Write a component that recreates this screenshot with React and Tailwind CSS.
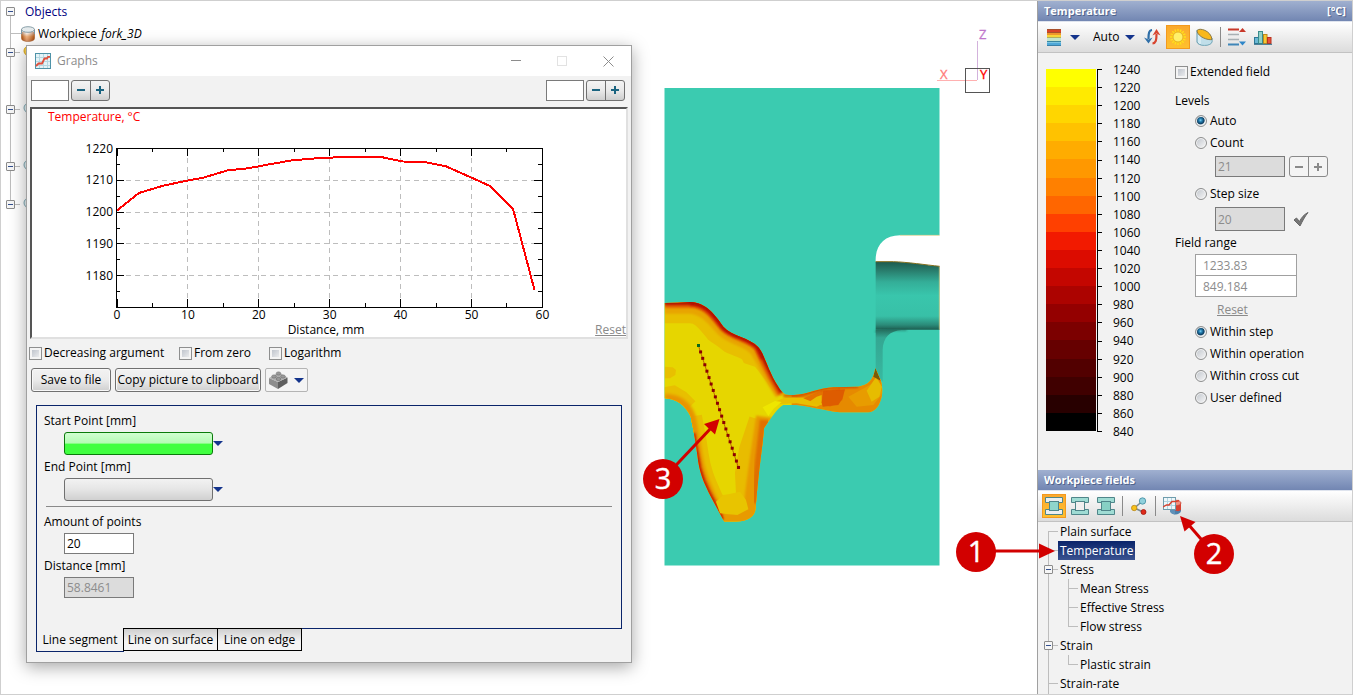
import React from "react";

const LEVELS = [
  "#ffff00", "#ffea00", "#ffd600", "#ffc200", "#ffac00", "#ff9800", "#ff8000", "#ff6600", "#ff4000", "#f21a00",
  "#dc0c00", "#c40600", "#ac0300", "#940000", "#7c0000", "#660000", "#520000", "#400000", "#280000", "#000000",
];

const SERIES = [
  [117, 210.5], [139, 193], [163, 185.7], [188, 180.5], [204, 177.5], [227, 170.5], [248, 168.3], [271, 164], [293, 160.2],
  [318, 158.2], [330, 157.7], [345, 156.8], [380, 156.8], [403, 161.5], [424, 162], [446, 166.3], [470, 177], [490, 186],
  [513, 208.7], [534.5, 290],
];

const SILHOUETTE =
  "M74,249 L112,248 L150,246 C200,248 225,285 250,320 C275,350 330,352 355,382 C375,405 385,455 415,500 C430,525 440,526 462,525 C500,524 540,503 580,502 L655,500 C685,495 700,480 706,445 L722,480 C728,500 728,515 725,530 C718,560 705,575 685,577 L600,577 C560,573 500,557 470,555 L430,555 C415,562 395,590 372,625 C368,680 357,740 347,865 C345,890 325,903 290,905 L253,905 L215,835 C190,785 178,760 172,705 C165,650 158,620 152,590 C135,555 110,537 74,535 Z";

function Caret({ className = "" }) {
  return (
    <svg width="10" height="5" viewBox="0 0 10 5" className={`shrink-0 ${className}`} aria-hidden="true">
      <path d="M0 0H10L5 5Z" fill="#14348c" />
    </svg>
  );
}

function ExpandBox() {
  return (
    <svg width="9" height="9" viewBox="0 0 9 9" className="relative shrink-0" aria-hidden="true">
      <rect x=".5" y=".5" width="8" height="8" rx=".5" fill="#f6f6f6" stroke="#8c8c8c" />
      <path d="M2 4.5H7" stroke="#33508f" />
    </svg>
  );
}

function CheckBox({ label }) {
  return (
    <label className="flex h-[18px] items-center gap-[2px]">
      <input
        type="checkbox"
        className="size-[13px] appearance-none border border-[#8e8f8f] bg-linear-to-br from-[#b4bac4] to-[#f6f6f6] shadow-[inset_0_0_0_2px_#f4f4f4]"
      />
      {label}
    </label>
  );
}

function Radio({ label, name, checked = false }) {
  return (
    <label className="flex h-[22px] items-center gap-[3px]">
      <input
        type="radio"
        name={name}
        defaultChecked={checked}
        className="size-3 appearance-none rounded-full border border-[#8e8f8f] bg-linear-to-br from-[#c0c5cc] to-[#f8f8f8] shadow-[inset_0_0_0_1px_#f4f4f4] checked:bg-[radial-gradient(circle_at_45%_42%,#7fd4f6_0,#2a86b8_18%,#0a3a5e_46%,#dfe6ea_58%,#eef1f3_100%)]"
      />
      {label}
    </label>
  );
}

function Stepper({ faded = false }) {
  const tone = faded
    ? "border-[#8a8a8a] bg-[#f4f4f4] text-[#8a8a8a]"
    : "border-[#707070] bg-linear-to-b from-[#f4f4f4] from-0% via-[#e9e9e9] via-50% to-[#cecece] text-[#1b6480]";
  return (
    <div className={`flex h-[21px] w-[39px] overflow-hidden rounded-[3px] border ${tone}`}>
      <button type="button" aria-label="Decrease" className="grid flex-1 place-items-center border-r border-inherit">
        <svg width="8" height="8" viewBox="0 0 8 8"><path d="M0 4H8" stroke="currentColor" strokeWidth="2" /></svg>
      </button>
      <button type="button" aria-label="Increase" className="grid flex-1 place-items-center">
        <svg width="8" height="8" viewBox="0 0 8 8"><path d="M0 4H8M4 0V8" stroke="currentColor" strokeWidth="2" /></svg>
      </button>
    </div>
  );
}

function PushButton({ children, className = "" }) {
  return (
    <button
      type="button"
      className={`h-6 rounded-[3px] border border-[#707070] bg-linear-to-b from-[#f2f2f2] via-[#ebebeb] via-50% to-[#cfcfcf] shadow-[inset_0_0_0_1px_#f8f8f8] ${className}`}
    >
      {children}
    </button>
  );
}

function GraphsIcon() {
  return (
    <svg width="16" height="16" viewBox="0 0 16 16" aria-hidden="true">
      <rect x=".5" y=".5" width="15" height="15" fill="#e4f3f7" stroke="#4f93a8" />
      <path d="M4.5 1V15M8.5 1V15M12.5 1V15M1 4.5H15M1 8.5H15M1 12.5H15" stroke="#b6d8e2" />
      <path d="M1 13L3.500 10.500L7 10.500L9.500 5.500L12 5.500L13 3.800L15 3.800" fill="none" stroke="#e0503c" strokeWidth="1.800" />
    </svg>
  );
}

function Bulb({ lit = false }) {
  return (
    <svg width="12" height="16" viewBox="0 0 12 16" aria-hidden="true">
      <path d="M6 1A5 5 0 0 0 1 6C1 9 4 9.500 4 12.500H8C8 9.500 11 9 11 6A5 5 0 0 0 6 1Z" fill={lit ? "#f6d04a" : "#e6f2f5"} stroke={lit ? "#d9a520" : "#7fa9b5"} />
      <path d="M4 14.500H8" stroke="#888" strokeWidth="2" />
    </svg>
  );
}

function ObjectTree() {
  const below = ["lit", "", "", "off", "", "", "off", "", "off"];
  return (
    <ul className="relative w-60 pl-[5px]">
      <li className="absolute top-3 left-[9px] h-[191px] w-px bg-[#bdbdbd]" aria-hidden="true" />
      <li className="relative flex h-[21px] items-center gap-[10px] text-[#00007f]">
        <ExpandBox />
        Objects
      </li>
      <li className="relative flex h-[21px] items-center pt-[2px] pl-[5px]">
        <span className="h-px w-[10px] bg-[#bdbdbd]" />
        <svg width="14" height="16" viewBox="0 0 14 16" aria-hidden="true">
          <defs>
            <linearGradient id="wp" x2="0" y2="1"><stop offset=".3" stopColor="#f3ebe4" /><stop offset=".6" stopColor="#e98b3c" /><stop offset="1" stopColor="#c4520c" /></linearGradient>
            <linearGradient id="wpx"><stop stopColor="#7a3000" stopOpacity=".5" /><stop offset=".4" stopColor="#fff" stopOpacity=".35" /><stop offset="1" stopColor="#7a3000" stopOpacity=".5" /></linearGradient>
          </defs>
          <path d="M.5 3.500V12.500C.5 16.300 13.500 16.300 13.500 12.500V3.500Z" fill="url(#wp)" stroke="#a8683a" strokeWidth=".8" />
          <path d="M1 6V12.500C1 16 13 16 13 12.500V6Z" fill="url(#wpx)" />
          <path d="M.5 8V3.500M13.500 8V3.500" stroke="#7d98a4" />
          <ellipse cx="7" cy="3.500" rx="6.500" ry="2.800" fill="#e4eaec" stroke="#6f8a95" strokeWidth=".8" />
        </svg>
        <span className="pl-[3px]">Workpiece <em className="pl-px">fork_3D</em></span>
      </li>
      {below.map((kind, i) => (
        <li key={i} className="relative flex h-[19px] items-center">
          {kind && (
            <>
              <ExpandBox />
              <span className="mr-[3px] h-px w-[5px] bg-[#bdbdbd]" />
              <Bulb lit={kind === "lit"} />
            </>
          )}
        </li>
      ))}
    </ul>
  );
}

function Chart() {
  const xs = [0, 10, 20, 30, 40, 50, 60];
  const ys = [1220, 1210, 1200, 1190, 1180];
  const px = (v) => 117 + v * 7.09;
  const py = (v) => 148.5 + (1220 - v) * 3.18;
  const minorX = [5, 15, 25, 35, 45, 55];
  const minorY = [1215, 1205, 1195, 1185, 1175];
  return (
    <div className="relative border-2 border-t-[#555] border-r-[#e0e0e0] border-b-[#e0e0e0] border-l-[#555] bg-white">
      <svg viewBox="32 109 594 228" className="block w-full" shapeRendering="crispEdges" fontSize="12">
        <g stroke="#bdbdbd" strokeDasharray="5 4">
          {xs.slice(1, 6).map((v) => <path key={v} d={`M${px(v)} 149V307`} />)}
          {ys.slice(1).map((v) => <path key={v} d={`M117 ${py(v)}H542`} />)}
        </g>
        <rect x="116.500" y="148.500" width="426" height="159" fill="none" stroke="#000" />
        <g stroke="#000">
          {xs.map((v) => <path key={v} d={`M${px(v)} 149v7M${px(v)} 307v-8`} />)}
          {minorX.map((v) => <path key={v} d={`M${px(v)} 149v3M${px(v)} 307v-4`} />)}
          {ys.map((v) => <path key={v} d={`M117 ${py(v)}h7M542 ${py(v)}h-8`} />)}
          {minorY.map((v) => <path key={v} d={`M117 ${py(v)}h3M542 ${py(v)}h-4`} />)}
        </g>
        <polyline points={SERIES.map((p) => p.join(",")).join(" ")} fill="none" stroke="#f00" strokeWidth="2" />
        <text x="48" y="121" fill="#f00">Temperature, °C</text>
        <g textAnchor="middle">
          {xs.map((v) => <text key={v} x={px(v)} y="319">{v}</text>)}
          <text x="326" y="334">Distance, mm</text>
        </g>
        <g textAnchor="end">
          {ys.map((v) => <text key={v} x="113" y={py(v) + 4}>{v}</text>)}
        </g>
      </svg>
      <a href="#reset-chart" className="absolute right-0 bottom-0 leading-[14px] text-[#8a8a8a] underline">Reset</a>
    </div>
  );
}

function PointPicker({ label, active = false }) {
  const tone = active
    ? "border-[#0b7a0b] bg-linear-to-b from-[#d2ffd2] from-0% via-[#b4fbb4] via-48% to-[#40ff40] to-52%"
    : "border-[#707070] bg-linear-to-b from-[#f2f2f2] from-0% via-[#e6e6e6] via-48% to-[#d0d0d0]";
  return (
    <div>
      <div className="h-[18px] leading-[18px]">{label}</div>
      <div className="mt-[2px] mb-[3px] flex items-center pl-5">
        <button type="button" aria-label={label} className={`h-[23px] w-[149px] rounded-[3px] border ${tone}`} />
        <button type="button" aria-label={`${label} options`} className="grid h-[23px] w-[10px] place-items-center"><Caret /></button>
      </div>
    </div>
  );
}

function GraphsWindow() {
  return (
    <section className="absolute top-[44px] left-[25px] w-[606px] border border-[#a0a0a0] bg-[#f2f2f2] shadow-[0_4px_16px_rgba(0,0,0,0.35)]">
      <header className="flex h-[30px] items-center bg-white pl-2 text-[#8c8c8c]">
        <GraphsIcon />
        <h2 className="pl-[6px]">Graphs</h2>
        <div className="ml-auto flex text-[#8c8c8c]">
          <button type="button" aria-label="Minimize" className="grid h-[30px] w-[46px] place-items-center">
            <svg width="10" height="10"><path d="M0 4.500H10" stroke="currentColor" /></svg>
          </button>
          <button type="button" aria-label="Maximize" disabled className="grid h-[30px] w-[46px] place-items-center text-[#e2e2e2]">
            <svg width="10" height="10"><rect x=".5" y=".5" width="9" height="9" fill="none" stroke="currentColor" /></svg>
          </button>
          <button type="button" aria-label="Close" className="grid h-[30px] w-[46px] place-items-center">
            <svg width="11" height="11"><path d="M.5 .5L10.500 10.500M10.500 .5L.5 10.500" stroke="currentColor" /></svg>
          </button>
        </div>
      </header>
      <div className="px-[3px]">
        <div className="flex h-[31px] items-center justify-between pr-[3px] pb-[3px] pl-px">
          {["Left cursor", "Right cursor"].map((n) => (
            <div key={n} className="flex gap-[2px]">
              <input type="text" aria-label={n} className="h-[21px] w-[38px] border border-[#7a7a7a] bg-white px-[2px]" />
              <Stepper />
            </div>
          ))}
        </div>
        <Chart />
        <div className="mt-[5px] -ml-px flex">
          <div className="w-[150px]"><CheckBox label="Decreasing argument" /></div>
          <div className="w-[90px]"><CheckBox label="From zero" /></div>
          <CheckBox label="Logarithm" />
        </div>
        <div className="mt-[6px] flex gap-1 pl-px">
          <PushButton className="w-20">Save to file</PushButton>
          <PushButton className="w-[146px]">Copy picture to clipboard</PushButton>
          <button type="button" aria-label="Appearance" className="flex h-6 w-[43px] items-center justify-center gap-[6px] rounded-[2px] border border-[#b4b4b4] bg-[#f4f4f4]">
            <svg width="19" height="18" viewBox="0 0 19 18" aria-hidden="true">
              <path d="M0 7L9 11V18L0 13Z" fill="#8d8d8d" />
              <path d="M9 11L18.500 6.500V12L9 18Z" fill="#5f5f5f" />
              <path d="M0 7L10 1.500L18.500 6.500L9 11Z" fill="#b0b0b0" />
              <g fill="#999" stroke="#6c6c6c" strokeWidth=".6">
                <ellipse cx="9.500" cy="2.500" rx="2.300" ry="1.600" />
                <ellipse cx="5" cy="5.500" rx="2.300" ry="1.600" />
                <ellipse cx="14" cy="5.500" rx="2.300" ry="1.600" />
                <ellipse cx="9.500" cy="8" rx="2.300" ry="1.600" />
              </g>
            </svg>
            <Caret />
          </button>
        </div>
      </div>
      <div className="mt-[13px] mr-[9px] mb-[10px] ml-[9px]">
        <div className="h-[224px] border border-[#0a246a] px-[7px] pt-[6px]">
          <PointPicker label="Start Point [mm]" active />
          <PointPicker label="End Point [mm]" />
          <hr className="mt-[5px] mr-[2px] mb-[6px] ml-[2px] border-[#8a8a8a]" />
          <label className="block leading-[18px]">
            Amount of points
            <input type="text" defaultValue="20" className="mt-[2px] mb-[3px] ml-5 block h-[21px] w-[70px] border border-[#7a7a7a] bg-white px-[2px]" />
          </label>
          <label className="block leading-[18px]">
            Distance [mm]
            <input type="text" defaultValue="58.8461" disabled className="mt-[2px] ml-5 block h-[21px] w-[70px] border border-[#7a7a7a] bg-[#dcdcdc] px-[2px] text-[#8c8c8c]" />
          </label>
        </div>
        <div role="tablist" className="relative -mt-px flex items-start">
          <button type="button" role="tab" aria-selected="true" className="h-6 w-[88px] border border-t-0 border-[#0a246a] bg-[#f2f2f2]">Line segment</button>
          <button type="button" role="tab" aria-selected="false" className="-ml-px h-[23px] w-[95px] border border-black bg-linear-to-b from-[#cfcfcf] to-[#f4f4f4] to-60%">Line on surface</button>
          <button type="button" role="tab" aria-selected="false" className="-ml-px h-[23px] w-[85px] border border-black bg-linear-to-b from-[#cfcfcf] to-[#f4f4f4] to-60%">Line on edge</button>
        </div>
      </div>
    </section>
  );
}

function Model() {
  const probes = Array.from({ length: 20 }, (_, i) => [175 + i * 6.32, 376 + i * 19.26]);
  return (
    <svg viewBox="664 88 276 478" width="276" height="478" className="absolute top-[87px] left-[663px]" role="img" aria-label="Workpiece cross section">
      <defs>
        <clipPath id="hot"><path d={SILHOUETTE} /></clipPath>
        <linearGradient id="tube" x2="0" y2="1">
          <stop offset="0" stopColor="#1c5a4e" /><stop offset=".12" stopColor="#287a6a" /><stop offset=".3" stopColor="#34ae98" />
          <stop offset=".5" stopColor="#39c6ac" /><stop offset=".8" stopColor="#38c0a7" /><stop offset=".93" stopColor="#2b8b79" /><stop offset="1" stopColor="#1d5e51" />
        </linearGradient>
        <linearGradient id="neck" x2="0" y2="1">
          <stop offset="0" stopColor="#257060" /><stop offset=".15" stopColor="#34a692" /><stop offset="1" stopColor="#38b9a1" />
        </linearGradient>
        <filter id="b6" x="-20%" y="-20%" width="140%" height="140%"><feGaussianBlur stdDeviation="5" /></filter>
        <filter id="b2" x="-20%" y="-20%" width="140%" height="140%"><feGaussianBlur stdDeviation="3" /></filter>
      </defs>
      <rect x="664.500" y="88" width="275" height="477.500" fill="#3bcbb0" />
      <g transform="translate(640 220) scale(.33333)">
        <path d="M707,125 H760 C800,126 860,135 899,139 V329 H707Z" fill="url(#tube)" />
        <path d="M707,336 C730,324 770,330 800,329" stroke="#1f6153" strokeWidth="7" fill="none" opacity=".6" filter="url(#b2)" />
        <path d="M707,330 H785 C750,332 729,352 728,390 V485 L707,460Z" fill="url(#neck)" />
        <path d="M707,125 C705,80 730,46 780,46 H900 V139 C860,135 800,125 760,125Z" fill="#fff" />
        <path d="M707,125 H760 C800,126 860,135 899,139" stroke="#8a6d1c" strokeWidth="3" fill="none" />
        <path d="M780,46H899M898,139V329" stroke="#f3d08a" strokeWidth="2" fill="none" />
        <path d={SILHOUETTE} fill="#e6d600" />
        <g clipPath="url(#hot)" fill="none">
          <path d="M74,250 H150 C200,250 225,290 250,320 C275,350 330,352 355,382 C385,440 395,470 430,525" stroke="#e8bf00" strokeWidth="120" />
          <path d="M74,330 L95,322 L112,328 L128,318 L150,318 L165,350 L205,360 L235,380 L262,402 L300,425 L345,440 L372,475 L400,515 L440,540 L300,640 L60,640Z" fill="#e6d600" />
          <path d="M74,260 H150 C195,262 222,300 250,330 C280,358 325,358 350,390 C375,430 390,470 425,520" stroke="#e8a400" strokeWidth="42" filter="url(#b2)" />
          <path d="M74,250 H150 C200,250 225,290 250,320 C275,350 330,352 355,382 C375,430 395,470 425,520" stroke="#e25800" strokeWidth="26" filter="url(#b2)" />
          <path d="M150,247 C200,247 225,287 250,318 C275,346 330,350 355,380 L372,415" stroke="#d02800" strokeWidth="22" filter="url(#b2)" />
          <path d="M74,248 H150 C200,246 225,285 250,320 C275,348 330,352 355,380 C385,440 395,470 425,515" stroke="#a80800" strokeWidth="11" filter="url(#b2)" />
          <path d="M74,440 L98,442 L108,450 L106,465 L90,475 L74,475Z" fill="#e8c000" />
          <path d="M74,525 L100,520 L125,535 L150,560" stroke="#e8bf00" strokeWidth="46" />
          <path d="M152,590 C158,625 165,650 172,705 C180,760 195,790 215,835 L253,905" stroke="#e8bf00" strokeWidth="68" />
          <path d="M74,536 C110,537 138,552 152,590 C158,625 165,650 172,705 C180,760 195,790 215,835 L253,905" stroke="#e89400" strokeWidth="30" filter="url(#b6)" />
          <path d="M160,640 C165,680 172,705 178,745 C190,790 195,795 215,835 L248,900" stroke="#c82000" strokeWidth="13" filter="url(#b2)" />
          <path d="M360,600 L330,690 L318,760 L322,840 L300,905" stroke="#e8bc00" strokeWidth="66" />
          <path d="M374,590 C362,680 350,740 338,850 C332,890 315,905 253,908" stroke="#e89a00" strokeWidth="52" filter="url(#b2)" />
          <path d="M376,600 C368,680 358,740 350,850" stroke="#e07000" strokeWidth="34" filter="url(#b2)" />
          <path d="M228,845 L250,825 L268,822 L300,815 L318,840 L325,868 L292,885 L240,880Z" fill="#e8c400" />
          <path d="M455,510 L560,495 H660 L706,440 L735,480 V580 H600 L455,562Z" fill="#e68a00" />
          <path d="M405,545 L440,530 L470,532 L530,535 L550,520 L560,545 L530,560 L470,550 L420,552Z" fill="#e8c000" />
          <path d="M368,562 L405,543 L425,546 L402,565 L385,588Z" fill="#eee600" />
          <path d="M490,535 L545,512 L600,505 L608,540 L570,560 L545,550 L515,545Z" fill="#e47200" />
          <path d="M508,545 L530,530 L545,525 L545,555 L525,552Z" fill="#e8bc00" />
          <path d="M550,512 L615,508 L608,535 L595,555 L548,560 L545,548Z" fill="#de5c00" />
          <path d="M625,530 L680,500 L715,480 L728,520 L700,555 L650,560Z" fill="#e89c00" />
          <path d="M680,512 L708,472 L726,500 L718,530 L695,545Z" fill="#e6bc00" />
          <path d="M430,527 H465 C500,524 540,503 580,502 L655,500" stroke="#cf4400" strokeWidth="7" filter="url(#b2)" />
          <path d="M700,470 L706,440 L722,482Z" fill="#7a5a08" />
        </g>
        <path d="M175,376L295,742" stroke="#8c0000" strokeWidth="1.5" />
        {probes.map(([x, y], i) => (
          <rect key={i} x={x - 4} y={y - 4} width="9" height="9" fill={i ? "#8c0000" : "#0a6a1a"} />
        ))}
      </g>
    </svg>
  );
}

function AxisTriad() {
  return (
    <svg width="56" height="70" viewBox="936 26 56 70" className="absolute top-[25px] right-[45px]" fontSize="13" aria-label="Axes">
      <path d="M977.500 41V80" stroke="#d3b2dc" />
      <path d="M937 80.500H977" stroke="#ffb0b0" />
      <rect x="965.500" y="68.500" width="24" height="24" fill="none" stroke="#555" />
      <text x="979" y="39" fill="#bf77cc" stroke="#bf77cc" strokeWidth=".3">Z</text>
      <text x="940" y="79" fill="#ff7a7a" stroke="#ff7a7a" strokeWidth=".3">X</text>
      <text x="980" y="79" fill="#f00" stroke="#f00" strokeWidth=".3">Y</text>
    </svg>
  );
}

function ToolButton({ label, active = false, children }) {
  return (
    <button
      type="button"
      aria-label={label}
      aria-pressed={active}
      className={`grid size-6 shrink-0 place-items-center ${active ? "border border-[#f39a1f] bg-linear-to-b from-[#fba92e] to-[#ffc02e]" : ""}`}
    >
      {children}
    </button>
  );
}

function Divider() {
  return <span className="mx-[2px] h-5 w-px shrink-0 bg-[#8a8a8a]" />;
}

function PanelHeader({ title, extra }) {
  return (
    <header className="flex h-[21px] shrink-0 items-center justify-between border-b border-[#dfe4ee] bg-linear-to-b from-[#a0b0d0] to-[#7286b2] px-[6px] text-[11px] font-bold text-white [text-shadow:1px_1px_0_#50638c]">
      <h2>{title}</h2>
      <span>{extra}</span>
    </header>
  );
}

function PanelToolbar({ children }) {
  return <div className="flex h-[31px] shrink-0 items-center gap-[2px] border-b border-[#c2c2c2] bg-linear-to-b from-white to-[#dcdcdc] px-1">{children}</div>;
}

function TemperaturePanel() {
  return (
    <section>
      <PanelHeader title="Temperature" extra="[°C]" />
      <PanelToolbar>
        <button type="button" aria-label="Palette" className="flex h-6 items-center gap-[9px] px-[5px]">
          <svg width="14" height="17" viewBox="0 0 14 17" shapeRendering="crispEdges" aria-hidden="true">
            <rect width="14" height="17" fill="#a8502c" />
            <rect y="1" width="14" height="2" fill="#d8402a" />
            <rect y="4" width="14" height="2" fill="#f0962c" />
            <rect y="6" width="14" height="2" fill="#f8d43a" />
            <rect y="8" width="14" height="1" fill="#b0b060" />
            <rect y="9" width="14" height="3" fill="#c4e4cc" />
            <rect y="12" width="14" height="1" fill="#3a86a0" />
            <rect y="13" width="14" height="1" fill="#7cc6e2" />
            <rect y="14" width="14" height="2" fill="#4fa8d8" />
            <rect y="16" width="14" height="1" fill="#3a80a8" />
          </svg>
          <Caret />
        </button>
        <div className="relative flex items-center">
          <select aria-label="Mode" defaultValue="Auto" className="h-6 w-[51px] appearance-none bg-transparent pl-[6px]">
            <option>Auto</option>
          </select>
          <Caret className="pointer-events-none absolute right-[3px]" />
        </div>
        <ToolButton label="Invert">
          <svg width="17" height="16" viewBox="0 0 17 16" fill="none" aria-hidden="true">
            <path d="M8 1C5 1.500 4.500 4 4.500 10" stroke="#2f6fa8" strokeWidth="2.200" />
            <path d="M0 8.500L4.500 14.500L8.500 8.500L4.500 10.500Z" fill="#2f6fa8" />
            <path d="M8.500 14.500C12 14 12.500 11 12.500 5" stroke="#d8452f" strokeWidth="2.200" />
            <path d="M8.500 6.500L12.500 0L16.500 6.500L12.500 4.500Z" fill="#d8452f" />
          </svg>
        </ToolButton>
        <ToolButton label="Lighting" active>
          <svg width="18" height="18" viewBox="0 0 18 18" aria-hidden="true">
            <g stroke="#ffe01a" strokeWidth="1.4">
              <path d="M9 1V17M1 9H17M3.300 3.300L14.700 14.700M14.700 3.300L3.300 14.700M5.900 1.600L12.100 16.400M12.100 1.600L5.900 16.400M1.600 5.900L16.400 12.100M16.400 5.900L1.600 12.100" />
            </g>
            <circle cx="9" cy="9" r="5" fill="#fff06a" stroke="#e0a41a" strokeWidth=".8" />
          </svg>
        </ToolButton>
        <ToolButton label="Section">
          <svg width="17" height="18" viewBox="0 0 17 18" aria-hidden="true">
            <path d="M1 2V14C2 18.500 15 18.500 16 14V10Z" fill="#d6ebf2" stroke="#5f98ac" />
            <path d="M5 9V17C9 18 14 17 16 14V11Z" fill="#a9d2e0" opacity=".5" />
            <path d="M1 3C2 -1 15 2 16 11.500C12 12.500 2 9 1 3Z" fill="#f9b81a" stroke="#8a7a4a" />
          </svg>
        </ToolButton>
        <Divider />
        <ToolButton label="Sort levels">
          <svg width="19" height="18" viewBox="0 0 19 18" aria-hidden="true">
            <path d="M0 1.500H11" stroke="#c8382a" strokeWidth="2" />
            <path d="M0 6.500H11M0 11.500H11" stroke="#a8b0b4" strokeWidth="1.600" />
            <path d="M0 16.500H11" stroke="#3f86b8" strokeWidth="2" />
            <path d="M11 4L14.500 0L18 4Z" fill="#c8382a" />
            <path d="M11 13.500H18L14.500 17.500Z" fill="#2f86c8" />
          </svg>
        </ToolButton>
        <ToolButton label="Histogram">
          <svg width="18" height="15" viewBox="0 0 18 15" aria-hidden="true">
            <rect x=".5" y="7.500" width="4" height="6" fill="#6bb8d4" stroke="#2f7896" />
            <rect x="4.500" y="1.500" width="4" height="12" fill="#8fd0c8" stroke="#3a8c8c" />
            <rect x="9.500" y="4.500" width="3.500" height="9" fill="#f5c832" stroke="#c08a1a" />
            <rect x="13.500" y="7.500" width="3.500" height="6" fill="#e8503a" stroke="#b8321f" />
            <path d="M0 14.300H18" stroke="#2a6a88" />
          </svg>
        </ToolButton>
      </PanelToolbar>
      <div className="flex pb-[29px] pl-2">
        <div className="flex w-[129px] pt-4">
          <div className="flex h-[362px] w-[50px] flex-col">
            {LEVELS.map((c) => <div key={c} className="flex-1" style={{ backgroundColor: c }} />)}
          </div>
          <svg width="5" height="364" viewBox="0 0 5 364" className="ml-px" shapeRendering="crispEdges" aria-hidden="true">
            <path d="M.5 0V363" stroke="#000" />
            {Array.from({ length: 21 }, (_, i) => <path key={i} d={`M0 ${Math.round(i * 18.1) + 0.5}H5`} stroke="#000" />)}
          </svg>
          <ol className="-mt-2 ml-[11px] flex h-[380px] flex-col justify-between leading-[18px]">
            {Array.from({ length: 21 }, (_, i) => <li key={i}>{1240 - i * 20}</li>)}
          </ol>
        </div>
        <div className="pt-[10px]">
          <CheckBox label="Extended field" />
          <h3 className="mt-[11px] leading-[18px]">Levels</h3>
          <div className="pl-5">
            <Radio label="Auto" name="levels" checked />
            <Radio label="Count" name="levels" />
            <div className="mt-[2px] flex items-center gap-1 pl-5">
              <input type="text" aria-label="Count" disabled defaultValue="21" className="h-[21px] w-[70px] border border-[#7a7a7a] bg-[#dcdcdc] px-[2px] text-[#8c8c8c]" />
              <Stepper faded />
            </div>
            <div className="mt-[6px]"><Radio label="Step size" name="levels" /></div>
            <div className="mt-[2px] flex items-center gap-2 pl-5">
              <input type="text" aria-label="Step size" disabled defaultValue="20" className="h-6 w-[70px] border border-[#7a7a7a] bg-[#dcdcdc] px-[2px] text-[#8c8c8c]" />
              <button type="button" aria-label="Apply">
                <svg width="16" height="15" viewBox="0 0 16 15"><path d="M1 8L3.500 6L6.500 9.500C8.500 5.500 11 2.500 15 .5C11.500 5 9.500 9 7 14Z" fill="#777" stroke="#666" /></svg>
              </button>
            </div>
          </div>
          <h3 className="mt-[3px] leading-[18px]">Field range</h3>
          <div className="pl-5">
            <div className="mt-[2px] w-[102px]">
              <input type="text" aria-label="Maximum" disabled defaultValue="1233.83" className="block h-[22px] w-full border border-[#a0a0a0] bg-white px-[7px] text-[#8c8c8c]" />
              <input type="text" aria-label="Minimum" disabled defaultValue="849.184" className="-mt-px block h-[22px] w-full border border-[#a0a0a0] bg-white px-[7px] text-[#8c8c8c]" />
            </div>
            <a href="#reset-range" className="mt-1 ml-[22px] block w-8 leading-[18px] text-[#8a8a8a] underline">Reset</a>
            <div className="mt-[2px]">
              <Radio label="Within step" name="range" checked />
              <Radio label="Within operation" name="range" />
              <Radio label="Within cross cut" name="range" />
              <Radio label="User defined" name="range" />
            </div>
          </div>
        </div>
      </div>
    </section>
  );
}

function FixtureIcon({ outer, inner }) {
  return (
    <svg width="18" height="18" viewBox="0 0 18 18" strokeWidth="1" aria-hidden="true">
      <path d="M.5 .5H17.500V5.500H13.500V4.500H4.500V5.500H.5Z" fill={outer} stroke="#4f868a" />
      <path d="M.5 17.500H17.500V12.500H13.500V13.500H4.500V12.500H.5Z" fill={outer} stroke="#4f868a" />
      <rect x="4.500" y="4.500" width="9" height="9" fill={inner} stroke="#4f868a" />
    </svg>
  );
}

const FIELDS = [
  { name: "Plain surface" },
  { name: "Temperature", selected: true },
  { name: "Stress", children: ["Mean Stress", "Effective Stress", "Flow stress"] },
  { name: "Strain", children: ["Plastic strain"] },
  { name: "Strain-rate" },
];

function FieldTree() {
  return (
    <ul className="relative min-h-0 flex-1 overflow-hidden pl-[6px]">
      <li className="absolute top-[10px] bottom-0 left-[10px] w-px bg-[#bdbdbd]" aria-hidden="true" />
      {FIELDS.map((f) => (
        <li key={f.name}>
          <div className="flex h-[19px] items-center">
            {f.children ? <ExpandBox /> : <span className="ml-1 h-px w-[5px] bg-[#bdbdbd]" />}
            <span className="h-px w-[5px] bg-[#bdbdbd]" />
            <span className={f.selected ? "bg-linear-to-b from-[#0a246a] to-[#3a5290] px-[2px] leading-[19px] text-white" : "px-[2px]"}>{f.name}</span>
          </div>
          {f.children && (
            <ul className="pl-[24px]">
              {f.children.map((c, i) => (
                <li key={c} className="flex h-[19px] items-center">
                  <span className={`w-px bg-[#bdbdbd] ${i === f.children.length - 1 ? "h-[10px] self-start" : "h-full"}`} />
                  <span className="h-px w-[9px] bg-[#bdbdbd]" />
                  <span className="pl-[2px]">{c}</span>
                </li>
              ))}
            </ul>
          )}
        </li>
      ))}
    </ul>
  );
}

function FieldsPanel() {
  return (
    <section className="flex min-h-0 flex-1 flex-col">
      <PanelHeader title="Workpiece fields" />
      <PanelToolbar>
        <ToolButton label="Workpiece only" active><FixtureIcon outer="#eceff0" inner="#8fd6cc" /></ToolButton>
        <ToolButton label="Tools only"><FixtureIcon outer="#9fdcd4" inner="#f0f0f0" /></ToolButton>
        <ToolButton label="All bodies"><FixtureIcon outer="#9fdcd4" inner="#86d0c4" /></ToolButton>
        <Divider />
        <ToolButton label="Link">
          <svg width="16" height="18" viewBox="0 0 16 18" aria-hidden="true">
            <path d="M11.500 4L3.500 11L12 15" fill="none" stroke="#7a8a90" strokeWidth="1.600" />
            <circle cx="11.500" cy="4" r="3.200" fill="#8fd0dc" stroke="#3f8ca0" strokeWidth=".8" />
            <circle cx="3.200" cy="11" r="2.700" fill="#f8c21a" stroke="#b8861a" strokeWidth=".8" />
            <circle cx="12.500" cy="15" r="2.500" fill="#e02a1a" stroke="#a01a10" strokeWidth=".8" />
          </svg>
        </ToolButton>
        <Divider />
        <ToolButton label="Graphs">
          <svg width="19" height="18" viewBox="0 0 19 18" aria-hidden="true">
            <path d="M7 6V14C8 18.500 17 18.500 18 14V6Z" fill="#4a80ac" />
            <path d="M7 6L12 9V17.500C9 17 7 15.500 7 14Z" fill="#5f90b8" />
            <path d="M11.500 8L18 6V13C16 14.500 14 14.500 11.500 13Z" fill="#d84030" />
            <ellipse cx="12.500" cy="6" rx="5.500" ry="2.800" fill="#f09080" stroke="#c8402f" strokeWidth=".7" />
            <rect x=".5" y=".5" width="12" height="12" fill="#eef7fa" stroke="#6f9cac" />
            <path d="M4.500 1V12M8.500 1V12M1 4.500H12M1 8.500H12" stroke="#b0d4e0" />
            <path d="M0 10L3.500 8L6 8L9 4.500L13 4.500L16 3.500" fill="none" stroke="#d8402c" strokeWidth="1.400" />
          </svg>
        </ToolButton>
      </PanelToolbar>
      <FieldTree />
    </section>
  );
}

function Callout({ n, className, viewBox, width, height, cx, cy, line, head }) {
  return (
    <svg width={width} height={height} viewBox={viewBox} className={`pointer-events-none absolute ${className}`} aria-label={`Step ${n}`}>
      <path d={line} stroke="#d20000" strokeWidth="3" />
      <path d={head} fill="#d20000" />
      <circle cx={cx} cy={cy} r="20" fill="#d20000" />
      <text x={cx} y={cy + 10} textAnchor="middle" fontSize="29" fill="#fff" stroke="#fff" strokeWidth=".4">{n}</text>
    </svg>
  );
}

export default function App() {
  return (
    <div className="flex h-screen min-h-[680px] overflow-hidden border border-[#cfcfcf] bg-white font-['Open_Sans','Noto_Sans',sans-serif] text-[12px] leading-4 text-black">
      <main className="relative min-w-0 flex-1">
        <ObjectTree />
        <Model />
        <GraphsWindow />
        <AxisTriad />
        <Callout
          n="3" width="80" height="84" viewBox="642 418 80 84" className="top-[417px] left-[641px]"
          cx={663} cy={479} line="M663 479L712 427" head="M719.500 419L704 424L715 434.500Z"
        />
      </main>
      <aside className="relative flex w-[315px] shrink-0 flex-col border-l border-[#a0a0a0] bg-[#f2f2f2]">
        <TemperaturePanel />
        <FieldsPanel />
        <Callout
          n="1" width="100" height="42" viewBox="955 531 100 42" className="top-[530px] -left-[83px]"
          cx={976} cy={552} line="M976 551H1042" head="M1055 551L1039 543.500V558.500Z"
        />
        <Callout
          n="2" width="58" height="60" viewBox="1178 515 58 60" className="top-[514px] left-[140px]"
          cx={1214} cy={554} line="M1214 554L1188 524" head="M1180 516L1184.500 531.500L1195.500 522Z"
        />
      </aside>
    </div>
  );
}
